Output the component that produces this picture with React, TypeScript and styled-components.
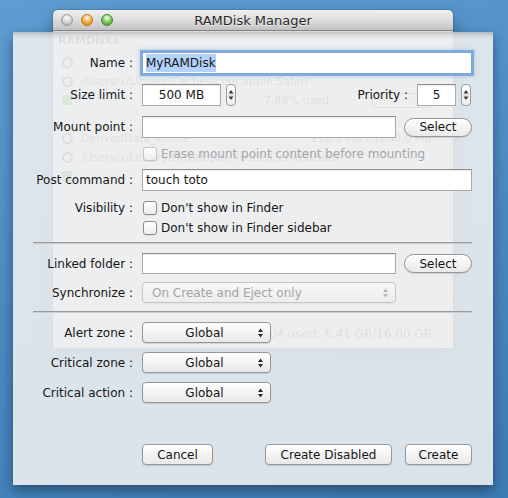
import styled, { createGlobalStyle } from "styled-components";

const GlobalStyle = createGlobalStyle`
  html, body {
    margin: 0;
    padding: 0;
  }
  body {
    font-family: "DejaVu Sans", "Lucida Grande", sans-serif;
    color: #161616;
  }
`;

const Desktop = styled.div`
  position: relative;
  width: 508px;
  height: 498px;
  overflow: hidden;
  background: linear-gradient(165deg, #5d9dd1 0%, #4b8bc3 50%, #3c7cb5 100%);
`;

/* ---------- main window, sitting behind the sheet ---------- */

const Window = styled.div`
  position: absolute;
  left: 53px;
  top: 10px;
  width: 400px;
  height: 338px;
  display: flex;
  flex-direction: column;
  border-radius: 5px 5px 0 0;
  box-shadow: 0 8px 18px rgba(0, 0, 0, 0.35), 0 0 0 1px rgba(0, 0, 0, 0.12);
`;

const TitleBar = styled.div`
  flex: none;
  height: 21px;
  box-sizing: border-box;
  display: grid;
  grid-template-columns: 80px 1fr 80px;
  align-items: center;
  padding: 0 8px;
  border-radius: 5px 5px 0 0;
  background: linear-gradient(#f0f0f0, #dadada 55%, #cacaca);
  border-bottom: 1px solid #8e8e8e;
`;

const Lights = styled.div`
  display: flex;
  gap: 8px;
`;

const Light = styled.span<{ $color: string; $edge: string }>`
  width: 12px;
  height: 12px;
  border-radius: 50%;
  box-sizing: border-box;
  border: 1px solid ${(p) => p.$edge};
  background: radial-gradient(circle at 50% 30%, #ffffff 0%, ${(p) => p.$color} 55%, ${(p) => p.$edge} 110%);
`;

const Title = styled.div`
  text-align: center;
  font-size: 13px;
  color: #2a2a2a;
  text-shadow: 0 1px 0 rgba(255, 255, 255, 0.6);
`;

const WindowBody = styled.div`
  flex: 1;
  display: flex;
  flex-direction: column;
  background: #ebebeb;
  padding: 3px 21px 7px 5px;
  color: #4a4a4a;
  font-size: 11px;
  filter: blur(0.7px);
`;

const ListHeading = styled.div`
  font-weight: bold;
  height: 16px;
  margin-bottom: 5px;
`;

const DiskEntry = styled.div`
  height: 76px;
  display: flex;
  flex-direction: column;
  gap: 5px;
  padding-left: 4px;
`;

const EntryLine = styled.div`
  height: 14px;
  display: flex;
  align-items: center;
  gap: 8px;
`;

const DiskIcon = styled.span`
  width: 11px;
  height: 11px;
  border-radius: 50%;
  border: 2px solid #555;
  box-sizing: border-box;
`;

const EntrySize = styled.span`
  margin-left: auto;
`;

const UsageBar = styled.span`
  width: 10px;
  height: 10px;
  background: #3c9a2c;
`;

const UsageText = styled.span`
  margin-left: 184px;
`;

const EjectButton = styled.span`
  margin-left: auto;
  width: 58px;
  height: 13px;
  border: 1px solid #555;
  border-radius: 3px;
`;

const RamUsed = styled.div`
  margin-top: auto;
  text-align: right;
  font-size: 12px;
`;

/* ---------- sheet ---------- */

const Sheet = styled.div`
  position: absolute;
  left: 13px;
  top: 32px;
  width: 480px;
  height: 453px;
  box-sizing: border-box;
  padding: 20px 21px 20px 20px;
  display: flex;
  flex-direction: column;
  background: rgba(236, 238, 240, 0.9);
  box-shadow: 0 5px 12px rgba(0, 0, 0, 0.4), inset 0 7px 6px -6px rgba(0, 0, 0, 0.3);
  font-size: 12px;
`;

const Row = styled.div<{ $top: number; $h: number }>`
  margin-top: ${(p) => p.$top}px;
  height: ${(p) => p.$h}px;
  display: grid;
  grid-template-columns: 100px 1fr;
  column-gap: 9px;
  align-items: center;
`;

const Label = styled.div`
  text-align: right;
  white-space: nowrap;
`;

const Field = styled.div`
  display: flex;
  align-items: center;
  height: 100%;
  min-width: 0;
`;

const Gap = styled.span<{ $w: number }>`
  flex: none;
  width: ${(p) => p.$w}px;
`;

const Separator = styled.div<{ $top: number }>`
  margin-top: ${(p) => p.$top}px;
  height: 1px;
  background: #9a9a9a;
  border-bottom: 1px solid rgba(255, 255, 255, 0.5);
`;

const TextField = styled.div<{ $focused?: boolean; $width?: number; $center?: boolean }>`
  ${(p) => (p.$width ? `width: ${p.$width}px; flex: none;` : "flex: 1;")}
  height: 100%;
  box-sizing: border-box;
  display: flex;
  align-items: center;
  justify-content: ${(p) => (p.$center ? "center" : "flex-start")};
  padding: 0 3px;
  background: #fff;
  border: 1px solid #a9a9a9;
  border-top-color: #8d8d8d;
  box-shadow: inset 0 1px 1px rgba(0, 0, 0, 0.08);
  white-space: nowrap;
  ${(p) =>
    p.$focused &&
    `
    border-color: #7aa5d6;
    box-shadow: 0 0 0 2px rgba(118, 165, 218, 0.85), 0 0 3px 3px rgba(118, 165, 218, 0.35);
  `}
`;

const Selection = styled.span`
  background: #b4d3fb;
  padding: 2px 0;
`;

const StepperBox = styled.div`
  flex: none;
  width: 10px;
  height: 22px;
  margin-left: 5px;
  box-sizing: border-box;
  border: 1px solid #9a9a9a;
  border-radius: 4px;
  background: linear-gradient(#ffffff, #eeeeee);
  display: flex;
  flex-direction: column;
  align-items: center;
  justify-content: center;
`;

const SideLabel = styled.div`
  margin-left: auto;
  margin-right: 9px;
  white-space: nowrap;
`;

const PushButton = styled.div<{ $width: number; $pill?: boolean }>`
  flex: none;
  width: ${(p) => p.$width}px;
  height: ${(p) => (p.$pill ? 19 : 21)}px;
  box-sizing: border-box;
  display: flex;
  align-items: center;
  justify-content: center;
  border: 1px solid #979797;
  border-radius: ${(p) => (p.$pill ? 10 : 4)}px;
  background: linear-gradient(#ffffff, #f3f3f3 50%, #e9e9e9);
  box-shadow: 0 1px 1px rgba(0, 0, 0, 0.12);
  white-space: nowrap;
`;

const PopUp = styled.div<{ $width: number; $disabled?: boolean }>`
  flex: none;
  width: ${(p) => p.$width}px;
  height: 21px;
  box-sizing: border-box;
  display: flex;
  align-items: center;
  padding: 0 6px 0 9px;
  border: 1px solid ${(p) => (p.$disabled ? "#c5c5c5" : "#979797")};
  border-radius: 4px;
  background: ${(p) => (p.$disabled ? "linear-gradient(#f7f7f7, #ededed)" : "linear-gradient(#ffffff, #f3f3f3 50%, #e8e8e8)")};
  box-shadow: 0 1px 1px rgba(0, 0, 0, ${(p) => (p.$disabled ? 0.04 : 0.12)});
  color: ${(p) => (p.$disabled ? "#a3a3a3" : "inherit")};
`;

const PopUpText = styled.span<{ $center?: boolean }>`
  flex: 1;
  text-align: ${(p) => (p.$center ? "center" : "left")};
  white-space: nowrap;
`;

const Check = styled.span<{ $disabled?: boolean }>`
  flex: none;
  width: 14px;
  height: 14px;
  margin-left: 1px;
  margin-right: 4px;
  box-sizing: border-box;
  border: 1px solid ${(p) => (p.$disabled ? "#c3c3c3" : "#8c8c8c")};
  border-radius: 3px;
  background: linear-gradient(#ffffff, #ececec);
  box-shadow: 0 1px 0 rgba(0, 0, 0, 0.06);
`;

const CheckText = styled.span<{ $disabled?: boolean }>`
  white-space: nowrap;
  color: ${(p) => (p.$disabled ? "#a6a6a6" : "inherit")};
`;

const ButtonBar = styled.div`
  display: flex;
  align-items: center;
  height: 100%;
  gap: 13px;
`;

const Spacer = styled.div`
  flex: 1;
`;

function Arrows({ color = "#2b2b2b" }: { color?: string }) {
  return (
    <svg width="7" height="12" viewBox="0 0 7 12">
      <path d="M3.5 1.5 L6 5 L1 5 Z" fill={color} />
      <path d="M3.5 10.5 L6 7 L1 7 Z" fill={color} />
    </svg>
  );
}

function Stepper() {
  return (
    <StepperBox>
      <svg width="6" height="16" viewBox="0 0 6 16">
        <path d="M3 3 L5.5 6.5 L0.5 6.5 Z" fill="#3a3a3a" />
        <path d="M0 8 H6" stroke="#c8c8c8" strokeWidth="1" />
        <path d="M3 13 L5.5 9.5 L0.5 9.5 Z" fill="#3a3a3a" />
      </svg>
    </StepperBox>
  );
}

function Select({ label, width, disabled }: { label: string; width: number; disabled?: boolean }) {
  return (
    <PopUp $width={width} $disabled={disabled}>
      <PopUpText $center={!disabled}>{label}</PopUpText>
      <Arrows color={disabled ? "#b5b5b5" : "#2b2b2b"} />
    </PopUp>
  );
}

export default function App() {
  return (
    <Desktop>
      <GlobalStyle />
      <Window>
        <TitleBar>
          <Lights>
            <Light $color="#cfcfcf" $edge="#9c9c9c" />
            <Light $color="#f5a63a" $edge="#c77a1a" />
            <Light $color="#72c24e" $edge="#3f8e2a" />
          </Lights>
          <Title>RAMDisk Manager</Title>
          <span />
        </TitleBar>
        <WindowBody>
          <ListHeading>RAMDisks</ListHeading>
          <DiskEntry>
            <EntryLine>
              <DiskIcon />
            </EntryLine>
            <EntryLine>
              <DiskIcon />
              <span>/Users/x/Library/Caches/com.apple.Safari</span>
            </EntryLine>
            <EntryLine>
              <UsageBar />
              <UsageText>7.88% used</UsageText>
              <EjectButton />
            </EntryLine>
          </DiskEntry>
          <DiskEntry>
            <EntryLine>
              <DiskIcon />
              <span>DerivedData_Xcode</span>
              <EntrySize>110.3 MB / 1000.0 MB</EntrySize>
            </EntryLine>
            <EntryLine>
              <DiskIcon />
              <span>/Users/x/Library/Developer/Xcode/DerivedData</span>
            </EntryLine>
            <EntryLine>
              <UsageBar />
              <UsageText>11.03% used</UsageText>
              <EjectButton />
            </EntryLine>
          </DiskEntry>
          <RamUsed>RAM used: 6.41 GB/16.00 GB</RamUsed>
        </WindowBody>
      </Window>

      <Sheet>
        <Row $top={0} $h={22}>
          <Label>Name :</Label>
          <Field>
            <TextField $focused>
              <Selection>MyRAMDisk</Selection>
            </TextField>
          </Field>
        </Row>

        <Row $top={10} $h={22}>
          <Label>Size limit :</Label>
          <Field>
            <TextField $width={79} $center>
              500 MB
            </TextField>
            <Stepper />
            <SideLabel>Priority :</SideLabel>
            <TextField $width={39} $center>
              5
            </TextField>
            <Stepper />
            <Gap $w={1} />
          </Field>
        </Row>

        <Row $top={10} $h={22}>
          <Label>Mount point :</Label>
          <Field>
            <TextField />
            <Gap $w={8} />
            <PushButton $width={68} $pill>
              Select
            </PushButton>
          </Field>
        </Row>

        <Row $top={8} $h={15}>
          <span />
          <Field>
            <Check $disabled />
            <CheckText $disabled>Erase mount point content before mounting</CheckText>
          </Field>
        </Row>

        <Row $top={8} $h={22}>
          <Label>Post command :</Label>
          <Field>
            <TextField>touch toto</TextField>
          </Field>
        </Row>

        <Row $top={9} $h={15}>
          <Label>Visibility :</Label>
          <Field>
            <Check />
            <CheckText>Don't show in Finder</CheckText>
          </Field>
        </Row>

        <Row $top={5} $h={15}>
          <span />
          <Field>
            <Check />
            <CheckText>Don't show in Finder sidebar</CheckText>
          </Field>
        </Row>

        <Separator $top={7} />

        <Row $top={9} $h={21}>
          <Label>Linked folder :</Label>
          <Field>
            <TextField />
            <Gap $w={8} />
            <PushButton $width={68} $pill>
              Select
            </PushButton>
          </Field>
        </Row>

        <Row $top={8} $h={21}>
          <Label>Synchronize :</Label>
          <Field>
            <Select label="On Create and Eject only" width={254} disabled />
          </Field>
        </Row>

        <Separator $top={8} />

        <Row $top={9} $h={21}>
          <Label>Alert zone :</Label>
          <Field>
            <Select label="Global" width={129} />
          </Field>
        </Row>

        <Row $top={9} $h={21}>
          <Label>Critical zone :</Label>
          <Field>
            <Select label="Global" width={129} />
          </Field>
        </Row>

        <Row $top={9} $h={21}>
          <Label>Critical action :</Label>
          <Field>
            <Select label="Global" width={129} />
          </Field>
        </Row>

        <Row $top={41} $h={21}>
          <span />
          <ButtonBar>
            <PushButton $width={71}>Cancel</PushButton>
            <Spacer />
            <PushButton $width={127}>Create Disabled</PushButton>
            <PushButton $width={67}>Create</PushButton>
          </ButtonBar>
        </Row>
      </Sheet>
    </Desktop>
  );
}
